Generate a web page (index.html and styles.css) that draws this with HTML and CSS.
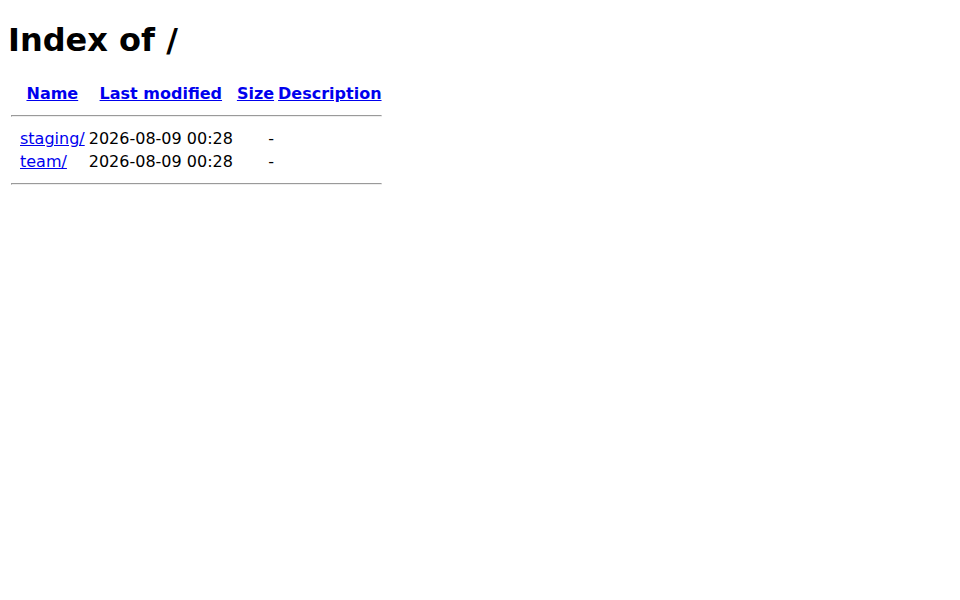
FILE: index.html
```html
<!DOCTYPE html>
<html>
<head>
<title>Index of /</title>
<link rel="stylesheet" href="styles.css">
</head>
<body class="page">
<h1 class="title">Index of /</h1>
<table class="listing">
<tr><th class="ico" valign="top"><span class="icon"></span></th><th><a href="?C=N;O=D">Name</a></th><th><a href="?C=M;O=A">Last modified</a></th><th><a href="?C=S;O=A">Size</a></th><th><a href="?C=D;O=A">Description</a></th></tr>
<tr><th colspan="5"><hr class="rule"></th></tr>
<tr><td class="ico" valign="top"><span class="icon"></span></td><td><a href="staging/">staging/</a></td><td align="right">2026-08-09 00:28  </td><td align="right">  - </td><td>&nbsp;</td></tr>
<tr><td class="ico" valign="top"><span class="icon"></span></td><td><a href="team/">team/</a></td><td align="right">2026-08-09 00:28  </td><td align="right">  - </td><td>&nbsp;</td></tr>
<tr><th colspan="5"><hr class="rule"></th></tr>
</table>
</body>
</html>
```

FILE: styles.css
```css
.page {
  font-family: "DejaVu Sans", sans-serif;
  font-size: 16px;
  color: #000;
  background: #fff;
  margin-top: 0;
}
.title {
  font-size: 2em;
}
.listing a {
  color: #0000ee;
}
.icon {
  display: inline-block;
  width: 5px;
}
.rule {
  color: gray;
}
```
